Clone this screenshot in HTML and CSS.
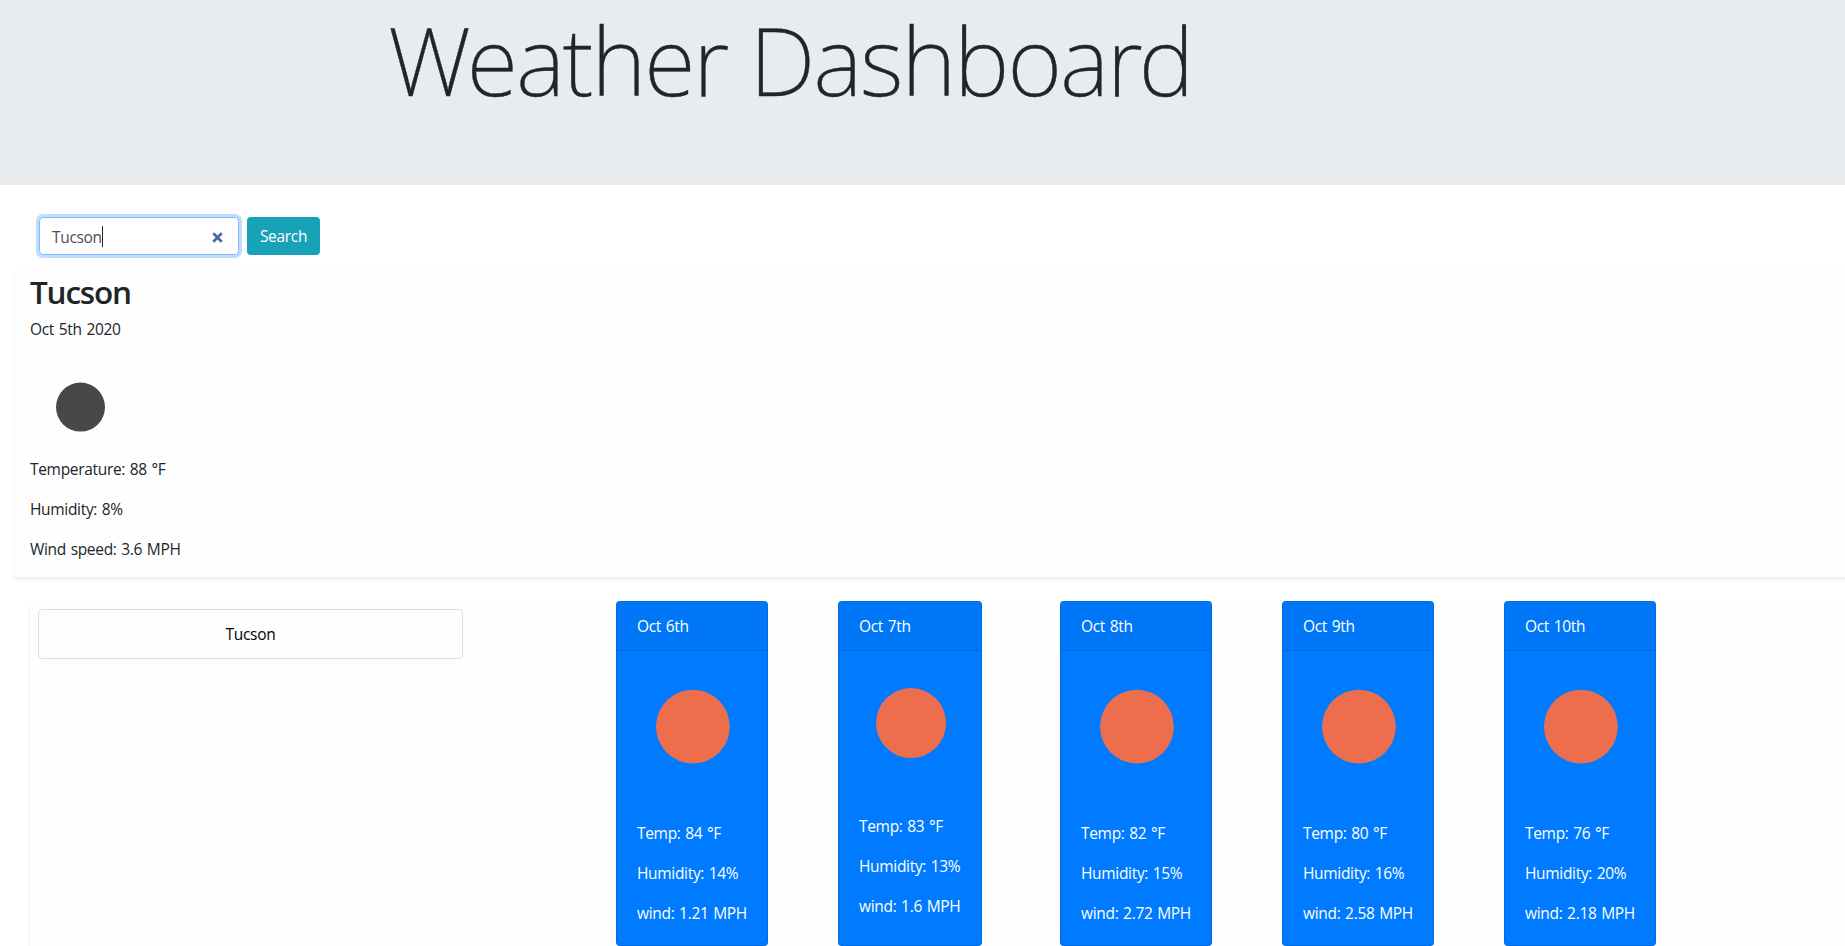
FILE: index.html
```html
<!DOCTYPE html>
<html lang="en">
<head>
<meta charset="utf-8">
<title>Weather Dashboard</title>
<link rel="stylesheet" href="styles.css">
</head>
<body>
<header class="jumbotron"><h1 class="title">Weather Dashboard</h1></header>
<form class="search">
  <div class="search-input"><span class="value">Tucson</span><span class="caret"></span>
    <svg class="clear" width="11" height="11" viewBox="0 0 11 11"><path d="M1.3 1.3 9.7 9.7M9.7 1.3 1.3 9.7" stroke="#4667a8" stroke-width="2.7"/></svg>
  </div>
  <button class="search-btn" type="button">Search</button>
</form>
<section class="current">
  <h2 class="city">Tucson</h2>
  <p>Oct 5th 2020</p>
  <svg class="icon" viewBox="0 0 100 100"><circle cx="50.5" cy="50.1" r="24.5" fill="#48484a"/></svg>
  <p>Temperature: 88 °F</p>
  <p>Humidity: 8%</p>
  <p>Wind speed: 3.6 MPH</p>
</section>
<section class="lower">
  <ul class="history"><li class="history-item">Tucson</li></ul>
  <div class="forecast">
    <div class="col"><article class="card">
      <div class="card-header">Oct 6th</div>
      <svg class="card-img" viewBox="0 0 100 100"><circle cx="50.6" cy="50.4" r="24.6" fill="#ec6e4c"/></svg>
      <div class="card-body"><p>Temp: 84 °F</p><p>Humidity: 14%</p><p>wind: 1.21 MPH</p></div>
    </article></div>
    <div class="col"><article class="card narrow">
      <div class="card-header">Oct 7th</div>
      <svg class="card-img" viewBox="0 0 100 100"><circle cx="50.6" cy="50.6" r="24.6" fill="#ec6e4c"/></svg>
      <div class="card-body"><p>Temp: 83 °F</p><p>Humidity: 13%</p><p>wind: 1.6 MPH</p></div>
    </article></div>
    <div class="col"><article class="card">
      <div class="card-header">Oct 8th</div>
      <svg class="card-img" viewBox="0 0 100 100"><circle cx="50.6" cy="50.4" r="24.6" fill="#ec6e4c"/></svg>
      <div class="card-body"><p>Temp: 82 °F</p><p>Humidity: 15%</p><p>wind: 2.72 MPH</p></div>
    </article></div>
    <div class="col"><article class="card">
      <div class="card-header">Oct 9th</div>
      <svg class="card-img" viewBox="0 0 100 100"><circle cx="50.6" cy="50.4" r="24.6" fill="#ec6e4c"/></svg>
      <div class="card-body"><p>Temp: 80 °F</p><p>Humidity: 16%</p><p>wind: 2.58 MPH</p></div>
    </article></div>
    <div class="col"><article class="card">
      <div class="card-header">Oct 10th</div>
      <svg class="card-img" viewBox="0 0 100 100"><circle cx="50.6" cy="50.4" r="24.6" fill="#ec6e4c"/></svg>
      <div class="card-body"><p>Temp: 76 °F</p><p>Humidity: 20%</p><p>wind: 2.18 MPH</p></div>
    </article></div>
  </div>
</section>
</body>
</html>
```
FILE: styles.css
```css
* { box-sizing: border-box; }
body {
  margin: 0;
  height: 946px;
  overflow: hidden;
  background: #fff;
  color: #212529;
  font-family: "Open Sans", "Noto Sans", sans-serif;
  font-size: 15.5px;
  line-height: 24px;
  letter-spacing: -0.32px;
  word-spacing: 1px;
}
p { margin: 0 0 16px; white-space: nowrap; }
.jumbotron { height: 185px; background: #e9ecef; padding: 0 0 0 388px; }
.title {
  margin: 0;
  font-family: "Noto Sans", "Open Sans", sans-serif;
  font-size: 94px;
  font-weight: 200;
  line-height: 120px;
  letter-spacing: -2.1px;
  word-spacing: 0;
  white-space: nowrap;
  -webkit-text-stroke: 0.4px #212529;
}
.search { display: flex; gap: 8px; padding: 32px 0 16px 39px; }
.search-input {
  display: flex;
  align-items: center;
  width: 200px;
  height: 38px;
  padding: 0 15px 0 12px;
  border: 1px solid #80bdff;
  border-radius: 4px;
  box-shadow: 0 0 0 3px #bfdeff;
  color: #495057;
}
.value { padding-top: 1px; }
.caret { width: 1px; height: 21px; background: #212529; }
.clear { display: block; margin: 3px 0 0 auto; }
.search-btn {
  width: 73px;
  height: 38px;
  padding: 0;
  border: 0;
  border-radius: 4px;
  background: #17a2b8;
  color: #fff;
  font: inherit;
  letter-spacing: inherit;
}
.current {
  width: 1845px;
  height: 306px;
  margin-left: 15px;
  padding-left: 15px;
  background: #fefefe;
  box-shadow: 0 2px 4px rgba(0, 0, 0, .09);
}
.city { margin: 0; padding-top: 2px; height: 46.4px; font-size: 31.5px; font-weight: 600; line-height: 38.4px; letter-spacing: -1.2px; }
.icon { display: block; width: 100px; height: 100px; }
.lower {
  display: flex;
  width: 1830px;
  height: 360px;
  margin: 24px 0 0 30px;
  background: #fefefe;
  box-shadow: 0 2px 4px rgba(0, 0, 0, .075);
}
.history { list-style: none; width: 425px; margin: 8px 153px 0 8px; padding: 0; }
.history-item {
  height: 50px;
  padding: 12px;
  border: 1px solid rgba(0, 0, 0, .125);
  border-radius: 4px;
  text-align: center;
  color: #000;
}
.forecast { display: flex; align-items: flex-start; }
.col { width: 222px; }
.card {
  width: 152px;
  height: 345px;
  border: 1px solid rgba(0, 0, 0, .125);
  border-radius: 4px;
  background: #007bff;
  color: #fff;
}
.narrow { width: 144.4px; }
.card-header { height: 49px; padding: 12px 20px; background: rgba(0, 0, 0, .03); border-bottom: 1px solid rgba(0, 0, 0, .125); }
.card-img { display: block; width: 100%; aspect-ratio: 1; }
.card-body { padding: 20px 20px 0; }
.narrow .card-body { padding-top: 20.6px; }
```
